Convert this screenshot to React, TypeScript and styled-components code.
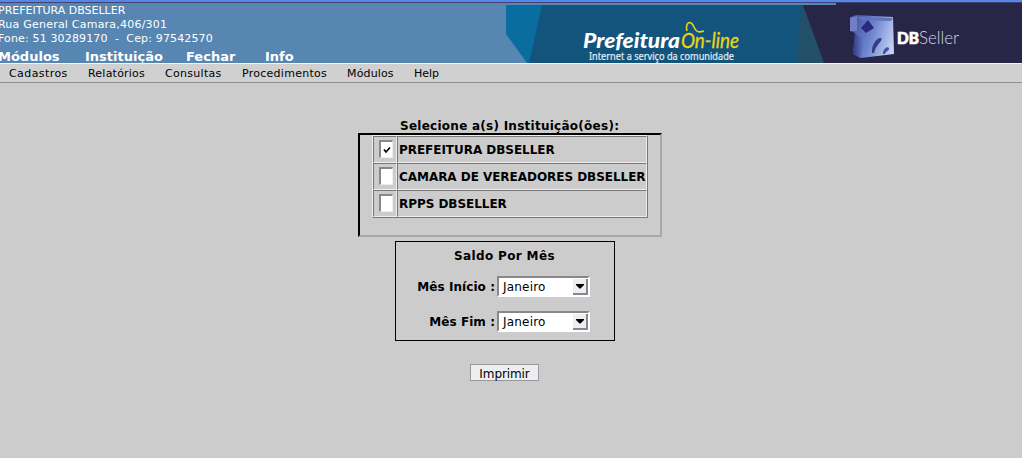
import React, { useState } from "react";
import styled, { createGlobalStyle } from "styled-components";

const Global = createGlobalStyle`
  * { box-sizing: border-box; }
  body { margin: 0; background: #ccc; overflow: hidden; font-family: "DejaVu Sans", sans-serif; color: #000; }
`;

const Page = styled.div`
  height: 458px;
  display: flex;
  flex-direction: column;
  background: #ccc;
`;

const Header = styled.header`
  height: 64px;
  display: flex;
  justify-content: space-between;
  overflow: hidden;
  background: #5786b2;
  border-top: 2px solid #5088ee;
  border-bottom: 1px solid #f4f4f4;
  box-shadow: inset 0 1px #45426f;
`;

const Identity = styled.div`
  width: 506px;
  padding-top: 2px;
  margin-left: -2px;
  color: #fff;
  white-space: pre;
`;

const AddressLine = styled.div<{ $spacing: number }>`
  height: 14px;
  line-height: 14px;
  font-size: 11px;
  letter-spacing: ${(p) => p.$spacing}px;
`;

const MainMenu = styled.nav`
  display: flex;
  padding-top: 3px;
  font-size: 13px;
  font-weight: bold;
  line-height: 16px;
`;

const MainItem = styled.span<{ $width: number }>`
  width: ${(p) => p.$width}px;
`;

const Banner = styled.svg`
  display: block;
  width: 516px;
  height: 61px;
  flex: none;
`;

const SubMenu = styled.nav`
  height: 19px;
  display: flex;
  flex: none;
  padding-left: 9px;
  background: #d0d0d0;
  border-bottom: 1px solid #8c8c8c;
  font-size: 11px;
  line-height: 20px;
`;

const SubItem = styled.span<{ $width: number; $spacing: number }>`
  width: ${(p) => p.$width}px;
  letter-spacing: ${(p) => p.$spacing}px;
`;

const Content = styled.main`
  width: 304px;
  margin-left: 358px;
  padding-top: 35px;
  display: flex;
  flex-direction: column;
`;

const Title = styled.div`
  height: 15px;
  line-height: 17px;
  font-size: 12px;
  font-weight: bold;
  letter-spacing: 0.26px;
  padding-left: 42px;
  white-space: nowrap;
`;

const Frame = styled.section`
  height: 104px;
  padding-left: 12px;
  border: 2px solid;
  border-color: #000 #a8a8a8 #a8a8a8 #000;
`;

const Grid = styled.div`
  width: 276px;
  border: 1px solid;
  border-color: #eee #777 #777 #eee;
`;

const GridRow = styled.label`
  display: grid;
  grid-template-columns: 24px 250px;
  height: 27px;
`;

const Cell = styled.span`
  display: flex;
  align-items: center;
  padding-left: 1px;
  border: 1px solid;
  border-color: #777 #eee #eee #777;
  font-size: 12px;
  font-weight: bold;
  letter-spacing: -0.04px;
  white-space: nowrap;
`;

const CheckCell = styled(Cell)`
  padding: 0 0 1px 5px;
`;

const Check = styled.button`
  width: 14px;
  height: 18px;
  padding: 0;
  display: flex;
  align-items: center;
  justify-content: center;
  background: #fff;
  border: solid;
  border-width: 2px 1px 1px 2px;
  border-color: #888 #eee #eee #888;
`;

const Panel = styled.section`
  width: 220px;
  height: 100px;
  margin: 4px 0 0 37px;
  border: 1px solid #000;
  font-size: 12px;
`;

const PanelTitle = styled.div`
  height: 34px;
  padding: 6px 1px 0 0;
  text-align: center;
  font-weight: bold;
  letter-spacing: 0.35px;
  line-height: 16px;
`;

const Field = styled.div`
  height: 35px;
  display: grid;
  grid-template-columns: 99px 93px;
  column-gap: 2px;
  line-height: 22px;
`;

const FieldLabel = styled.span`
  text-align: right;
  font-weight: bold;
  letter-spacing: 0.06px;
`;

const Select = styled.button`
  width: 93px;
  height: 21px;
  padding: 0 0 0 4px;
  display: flex;
  justify-content: space-between;
  background: #fff;
  border: 2px solid;
  border-color: #888 #fff #fff #888;
  color: #000;
  font: 12px/18px "DejaVu Sans", sans-serif;
  letter-spacing: 0.2px;
`;

const Arrow = styled.span`
  width: 15px;
  height: 16px;
  margin-top: 1px;
  display: flex;
  align-items: center;
  justify-content: center;
  background: #eceef2;
  border: solid #85878c;
  border-width: 0 2px 2px 0;
`;

const Print = styled.button`
  width: 69px;
  height: 17px;
  margin: 23px 0 0 112px;
  padding: 0;
  background: #eceef2;
  border: 1px solid #999;
  color: #000;
  font: 12px/19px "DejaVu Sans", sans-serif;
  letter-spacing: -0.1px;
  display: flex;
  justify-content: center;
`;

const mainItems: [string, number][] = [["Módulos", 87], ["Instituição", 101], ["Fechar", 79], ["Info", 40]];
const subItems: [string, number, number][] = [
  ["Cadastros", 79, 0.42],
  ["Relatórios", 77, 0.22],
  ["Consultas", 77, 0.3],
  ["Procedimentos", 105, 0.27],
  ["Módulos", 67, 0.15],
  ["Help", 40, 0],
];
const institutions = ["PREFEITURA DBSELLER", "CAMARA DE VEREADORES DBSELLER", "RPPS DBSELLER"];

function BannerArt() {
  return (
    <Banner viewBox="506 2 516 61">
      <defs>
        <linearGradient id="cube" x1="0" x2="1" y1=".3" y2=".6">
          <stop offset="0" stopColor="#4552a4" />
          <stop offset=".5" stopColor="#6d86cf" />
          <stop offset="1" stopColor="#c3cff3" />
        </linearGradient>
        <linearGradient id="cubeSide" x1="0" x2="1">
          <stop offset="0" stopColor="#303a88" />
          <stop offset="1" stopColor="#6078c6" />
        </linearGradient>
      </defs>
      <path d="M506 2H1022V3H506Z" fill="#45426f" />
      <path d="M506 5H560V63H527L506 34Z" fill="#0a6d9f" />
      <path d="M542 5H804V63H529Z" fill="#13547d" />
      <path d="M802 5H804L825 63H796Z" fill="#235069" />
      <path d="M803 5H836V3H1022V63H824Z" fill="#272646" />
      <g fontFamily="Lato, sans-serif">
        <text x="583" y="48" fontSize="20.5" fontWeight="900" fontStyle="italic" fill="#fff" textLength="97" lengthAdjust="spacingAndGlyphs">Prefeitura</text>
        <text x="681" y="48" fontSize="20.5" fontStyle="italic" fill="#ead515" stroke="#ead515" strokeWidth=".3" textLength="58" lengthAdjust="spacingAndGlyphs">On-line</text>
      </g>
      <text x="589" y="60" fontFamily='"Noto Sans", sans-serif' fontSize="10" fill="#e2edf4" stroke="#e2edf4" strokeWidth=".2" textLength="145" lengthAdjust="spacingAndGlyphs">Internet a serviço da comunidade</text>
      <path d="M687 31C685 23 690 20 693 25C696 32 698 33 704 31" fill="none" stroke="#ead515" strokeWidth="1.6" />
      <path d="M850 17L856 15L893 17L894 54L861 58L853 54L855 33L850 31Z" fill="url(#cube)" />
      <path d="M850 18L857 16V31L850 31Z" fill="#737fc5" />
      <path d="M855 34L863 39L861 58L853 54Z" fill="url(#cubeSide)" />
      <path d="M857 17L893 18L891 21L862 20Z" fill="#6474bb" />
      <path d="M868 20L874 28L866 33L861 28Z" fill="#292a7f" />
      <path d="M872 53C871 45 877 37 881 38C884 40 876 44 874 53Z" fill="#353c88" />
      <path d="M883 54C883 49 887 46 889 48C890 50 886 51 885 54Z" fill="#4551a2" />
      <text x="897" y="44" fontFamily='Lato, sans-serif' fontSize="16" fontWeight="900" fill="#fff" stroke="#fff" strokeWidth=".7" textLength="22" lengthAdjust="spacingAndGlyphs">DB</text>
      <text x="919" y="44" fontFamily="Lato, sans-serif" fontSize="17" fontWeight="300" fill="#d5d4e4" textLength="40" lengthAdjust="spacingAndGlyphs">Seller</text>
    </Banner>
  );
}

function MonthField({ label }: { label: string }) {
  return (
    <Field>
      <FieldLabel>{label}</FieldLabel>
      <Select>
        Janeiro
        <Arrow><svg width="8" height="5"><path d="M0 0H8V1L4.5 4.5H3.5L0 1Z" /></svg></Arrow>
      </Select>
    </Field>
  );
}

export default function App() {
  const [checked, setChecked] = useState([true, false, false]);
  return (
    <Page>
      <Global />
      <Header>
        <Identity>
          <AddressLine $spacing={0}>PREFEITURA DBSELLER</AddressLine>
          <AddressLine $spacing={0.22}>Rua General Camara,406/301</AddressLine>
          <AddressLine $spacing={0.15}>{"Fone: 51 30289170  -  Cep: 97542570"}</AddressLine>
          <MainMenu>{mainItems.map(([t, w]) => <MainItem key={t} $width={w}>{t}</MainItem>)}</MainMenu>
        </Identity>
        <BannerArt />
      </Header>
      <SubMenu>{subItems.map(([t, w, s]) => <SubItem key={t} $width={w} $spacing={s}>{t}</SubItem>)}</SubMenu>
      <Content>
        <Title>Selecione a(s) Instituição(ões):</Title>
        <Frame>
          <Grid>
            {institutions.map((name, i) => (
              <GridRow key={name}>
                <CheckCell>
                  <Check onClick={() => setChecked(checked.map((c, j) => (j === i ? !c : c)))}>
                    {checked[i] && <svg width="8" height="8"><path d="M1 3.5L3 6L7 1.5" fill="none" stroke="#000" strokeWidth="1.7" /></svg>}
                  </Check>
                </CheckCell>
                <Cell>{name}</Cell>
              </GridRow>
            ))}
          </Grid>
        </Frame>
        <Panel>
          <PanelTitle>Saldo Por Mês</PanelTitle>
          <MonthField label="Mês Início :" />
          <MonthField label="Mês Fim :" />
        </Panel>
        <Print>Imprimir</Print>
      </Content>
    </Page>
  );
}
